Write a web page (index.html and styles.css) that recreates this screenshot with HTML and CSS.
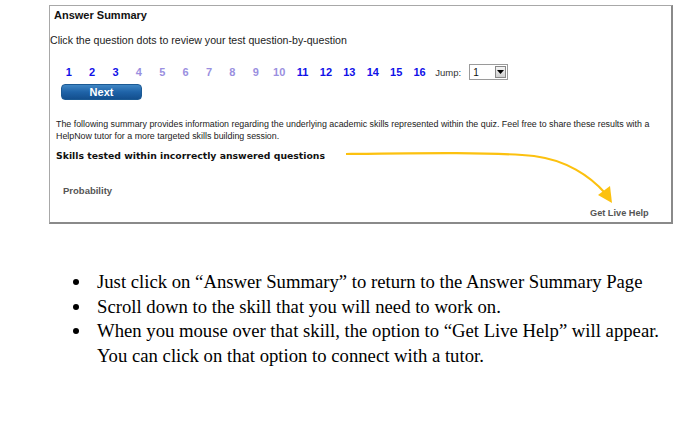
FILE: index.html
```html
<!DOCTYPE html>
<html lang="en">
<head>
    <meta charset="UTF-8">
    <title>Answer Summary</title>
    <link rel="stylesheet" href="styles.css">
</head>
<body>
    <div class="panel">
        <h2 class="panel-title">Answer Summary</h2>
        <p class="hint">Click the question dots to review your test question-by-question</p>

        <div class="dots">
            <a class="dot done">1</a>
            <a class="dot done">2</a>
            <a class="dot done">3</a>
            <a class="dot open">4</a>
            <a class="dot open">5</a>
            <a class="dot open">6</a>
            <a class="dot open">7</a>
            <a class="dot open">8</a>
            <a class="dot open">9</a>
            <a class="dot open">10</a>
            <a class="dot done">11</a>
            <a class="dot done">12</a>
            <a class="dot done">13</a>
            <a class="dot done">14</a>
            <a class="dot done">15</a>
            <a class="dot done">16</a>
            <span class="jump">Jump:</span>
            <span class="jump-select">
                <span class="jump-value">1</span>
                <span class="jump-btn">
                    <svg width="7" height="4" viewBox="0 0 7 4"><path d="M0 0h7L3.5 4z" fill="#000"/></svg>
                </span>
            </span>
        </div>
        <button class="next-btn">Next</button>

        <p class="summary">The following summary provides information regarding the underlying academic skills represented within the quiz. Feel free to share these results with a HelpNow tutor for a more targeted skills building session.</p>
        <h3 class="skills-title">Skills tested within incorrectly answered questions</h3>

        <div class="skill-row">Probability</div>
        <div class="live-help">Get Live Help</div>

        <!-- yellow arrow drawn over the screenshot -->
        <svg class="arrow" width="300" height="60" viewBox="0 0 300 60">
            <path d="M2 6 C 80 5, 150 4, 190 8 C 222 12, 246 28, 261 45" fill="none" stroke="#fcc10f" stroke-width="2.2"/>
            <path d="M254 47 L 266 38 L 268 55 Z" fill="#fcc10f"/>
        </svg>
    </div>

    <ul class="notes">
        <li>Just click on &ldquo;Answer Summary&rdquo; to return to the Answer Summary Page</li>
        <li>Scroll down to the skill that you will need to work on.</li>
        <li>When you mouse over that skill, the option to &ldquo;Get Live Help&rdquo; will appear. You can click on that option to connect with a tutor.</li>
    </ul>
</body>
</html>
```

FILE: styles.css
```css
body {
    margin: 0;
    background-color: #fff;
    font-family: 'Liberation Sans', Arial, sans-serif;
}

.panel {
    position: relative;
    margin: 5px 0 0 49px;
    width: 621px;
    height: 216px;
    border-top: 1px solid #a8a8a8;
    border-left: 1px solid #a8a8a8;
    border-right: 2px solid #8a8a8a;
    border-bottom: 2px solid #8a8a8a;
}

.panel-title {
    margin: 3px 0 0 4px;
    font-size: 11px;
    font-weight: bold;
    color: #111;
}

.hint {
    margin: 13px 0 0 0;
    font-size: 10.6px;
    color: #222;
}

.dots {
    display: flex;
    align-items: center;
    margin: 18px 0 0 7px;
    height: 16px;
}

.dot {
    width: 23.4px;
    text-align: center;
    font-size: 11px;
    font-weight: bold;
    cursor: pointer;
}

.dot.done {
    color: #1010e8;
}

.dot.open {
    color: #9a8fe0;
}

.jump {
    margin-left: 4px;
    font-size: 9.5px;
    color: #333;
}

.jump-select {
    display: flex;
    align-items: center;
    margin-left: 8px;
    width: 37px;
    height: 14px;
    border: 1px solid #9a9a9a;
    background-color: #fff;
}

.jump-value {
    flex: 1;
    padding-left: 3px;
    font-size: 10px;
    color: #111;
}

.jump-btn {
    display: flex;
    align-items: center;
    justify-content: center;
    width: 11px;
    height: 12px;
    margin-right: 1px;
    border: 1px solid #888;
    background: linear-gradient(#f4f4f4, #cfcfcf);
    box-sizing: border-box;
}

.next-btn {
    display: block;
    margin: 4px 0 0 11px;
    width: 81px;
    height: 16px;
    padding: 0;
    border: 1px solid #1c5a94;
    border-radius: 4px;
    background: linear-gradient(#3f86c4, #1f63a8 50%, #134f8e);
    color: #fff;
    font-family: 'Liberation Sans', Arial, sans-serif;
    font-size: 11px;
    font-weight: bold;
}

.summary {
    margin: 18px 0 0 6px;
    width: 605px;
    font-size: 8.85px;
    line-height: 12px;
    color: #222;
}

.skills-title {
    margin: 8px 0 0 6px;
    font-family: 'DejaVu Sans', Verdana, sans-serif;
    font-size: 9.3px;
    font-weight: bold;
    color: #111;
}

.skill-row {
    margin: 24px 0 0 13px;
    font-size: 9.5px;
    font-weight: bold;
    color: #555;
}

.live-help {
    margin: 12px 0 0 540px;
    font-size: 9.2px;
    font-weight: bold;
    color: #555;
}

.arrow {
    position: absolute;
    left: 294px;
    top: 142px;
}

.notes {
    margin: 46px 0 0 0;
    padding-left: 97px;
    width: 594px;
    list-style: none;
    font-family: 'Liberation Serif', 'Times New Roman', serif;
    font-size: 18.7px;
    line-height: 24.5px;
    color: #000;
}

.notes li {
    position: relative;
}

.notes li::before {
    content: "";
    position: absolute;
    left: -24px;
    top: 9px;
    width: 6px;
    height: 6px;
    border-radius: 50%;
    background-color: #000;
}
```
